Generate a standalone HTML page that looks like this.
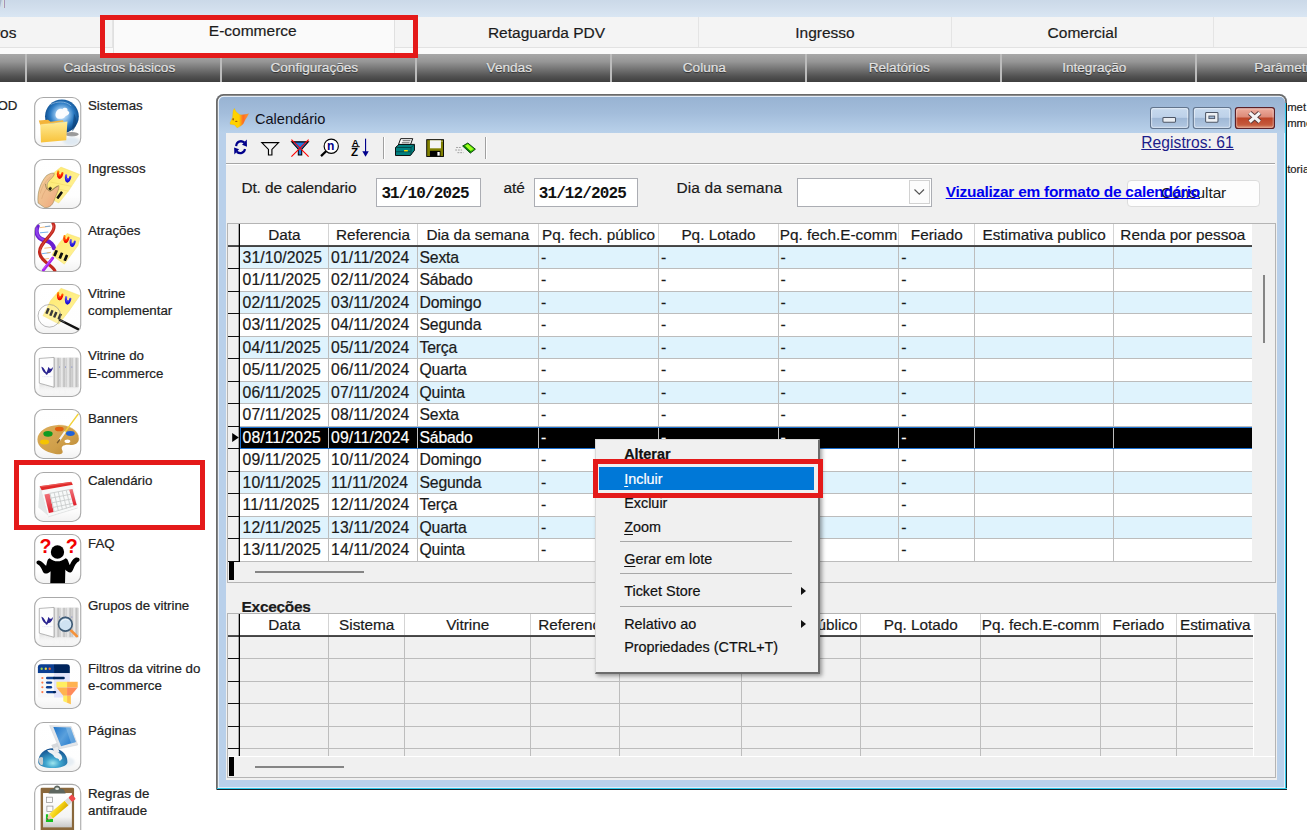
<!DOCTYPE html>
<html lang="pt-BR"><head><meta charset="utf-8"><title>Calendário</title>
<style>
*{box-sizing:border-box}
html,body{margin:0;padding:0}
body{width:1307px;height:830px;overflow:hidden;position:relative;background:#fff;font-family:"Liberation Sans",sans-serif;font-size:15px;color:#1a1a1a}
.abs{position:absolute}
/* top strip */
#strip{position:absolute;left:0;top:0;width:1307px;height:17px;background:linear-gradient(180deg,#cbd9e8 0%,#d2dfed 50%,#d9e6f3 100%)}
/* tabs */
#tabs{position:absolute;left:0;top:17px;width:1307px;height:31px;background:#f4f4f4;border-bottom:1px solid #e2e2e2}
.tab{-webkit-text-stroke:.2px #1c1c1c;position:absolute;top:0;height:30px;padding-top:0.8px;border-right:1px solid #e4e4e4;font-size:15.5px;line-height:30px;text-align:center;color:#1c1c1c;white-space:nowrap}
.tab.sel{height:37px;z-index:2;background:#fafafa;border-left:1px solid #e0e0e0;border-right:1px solid #e0e0e0}
/* dark menubar */
#mbar{position:absolute;left:0;top:54px;width:1307px;height:28px;background:linear-gradient(180deg,#a8a8a8 0%,#959595 28%,#727272 55%,#525252 80%,#3e3e3e 100%)}
.mi{-webkit-text-stroke:.2px #e2e2e2;position:absolute;top:0;height:28px;padding-right:7px;font-size:13.6px;line-height:27px;text-align:center;color:#e2e2e2;text-shadow:0 1px 1px rgba(0,0,0,.55);white-space:nowrap}
.mi:before{content:"";position:absolute;left:0;top:0;width:1.6px;height:28px;background:#bcbcbc}
/* red annotation */
.red{position:absolute;border:5px solid #e41a1a;z-index:50}
/* sidebar */
.ico{position:absolute;left:34px;width:48px;height:50px;border:1px solid #9a9a9a;border-radius:9px;background:linear-gradient(180deg,#ffffff 0%,#fdfdfd 70%,#f1f1f1 100%);overflow:hidden}
.ico svg{position:absolute;left:0;top:0}
.lbl{position:absolute;left:88px;font-size:13.3px;-webkit-text-stroke:.22px #222;line-height:17.5px;color:#222;white-space:nowrap}
.rt{position:absolute;left:1287.2px;font-size:11.3px;line-height:16px;-webkit-text-stroke:.2px;color:#222;white-space:nowrap}
/* window */
#win{position:absolute;left:216.2px;top:94.1px;width:1071.2px;height:696.2px;border-radius:7.5px 7.5px 1px 1px;background:#b9d0ea;box-shadow:inset 0 0 0 1.8px #6a6a6a, inset 0 0 0 2.8px rgba(255,255,255,.8);overflow:hidden}
#win .tbar{position:absolute;left:2.8px;top:2.8px;right:2.8px;height:36.2px;border-radius:5px 5px 0 0;background:linear-gradient(180deg,#98b3d3 0%,#a3bddb 45%,#b9d1ea 100%)}
#win .bline{position:absolute;left:1px;right:0;bottom:0;height:2.3px;background:linear-gradient(180deg,#2fc8ea 0,#2fc8ea 48%,#16242a 52%,#16242a 100%)}
#win .rline{position:absolute;right:0;top:9px;bottom:0;width:2.3px;background:linear-gradient(90deg,#2fc8ea 0,#2fc8ea 48%,#16242a 52%,#16242a 100%)}
#title{position:absolute;left:38.7px;top:15px;font-size:14.6px;line-height:20px;color:#10101a;white-space:nowrap}
#client{position:absolute;left:10.3px;top:39.1px;width:1050.7px;height:647px;background:#f0f0f0}
.wb{position:absolute;top:13px;height:22px;width:39px;border-radius:4px;border:1px solid #6d7f96;box-shadow:inset 0 0 0 1px rgba(255,255,255,.6)}
.wb.n{background:linear-gradient(180deg,#c6d9ee 0%,#bcd0e8 48%,#a3bbd8 52%,#b0c6e0 100%)}
.wb.c{background:linear-gradient(180deg,#e8a898 0%,#d98674 48%,#c04a2e 52%,#cc6a4e 100%);border-color:#6a2a22}
/* toolbar */
#tb{position:absolute;left:0;top:0;width:1051px;height:30px}
.sep{position:absolute;top:4px;width:2px;height:22px;border-left:1px solid #a0a0a0;border-right:1px solid #fff}
#tbl{position:absolute;left:0;top:30px;width:1049px;height:2px;border-top:1px solid #a6a6a6;border-bottom:1px solid #fff}
.t15{-webkit-text-stroke:.2px #1a1a1a;position:absolute;font-size:15.45px;letter-spacing:-.1px;line-height:18px;white-space:nowrap;color:#1a1a1a}
.inp{position:absolute;top:44.9px;height:29.3px;background:#fff;border:1px solid #abadb3;font-family:"Liberation Mono",monospace;font-weight:bold;font-size:16px;letter-spacing:-.87px;line-height:30.5px;padding-left:4px;color:#111;white-space:nowrap;overflow:hidden}
a.lnk{position:absolute;color:#0000ee;font-weight:bold;text-decoration:underline;font-size:15.45px;letter-spacing:-.25px;line-height:18px;white-space:nowrap}
#btn{position:absolute;letter-spacing:-.1px;border:1px solid #dcdcdc;border-radius:4px;background:#fdfdfd;text-align:center;font-size:15.45px;line-height:24.5px;color:#1a1a1a}
/* grids */
.grid{position:absolute;overflow:hidden;background:#f0f0f0;border:1px solid #b4b4b4}
.grid .hd{position:absolute;left:12px;top:0;height:21px;background:#fff}
.grid .h{-webkit-text-stroke:.2px #1a1a1a;position:absolute;top:0;height:21px;line-height:22.5px;text-align:center;font-size:15.3px;letter-spacing:0;border-right:1px solid #d4d4d4;white-space:nowrap;overflow:hidden;color:#1a1a1a}
.grid .row{position:absolute;left:12px;border-bottom:1px solid #bcbcbc;background:#fff;overflow:hidden}
.grid .row.alt{background:#dff3fd}
.grid .row.sel{background:#000;color:#fff;border-top:1px solid #1a6fd0;border-bottom:1px solid #1a6fd0;border-left:1px solid #1a6fd0}
.grid .c{-webkit-text-stroke:.2px;position:absolute;top:0;height:100%;line-height:21.6px;font-size:15.75px;letter-spacing:.06px;padding-left:1.9px;border-right:1px solid #bdbdbd;white-space:nowrap;overflow:hidden}
.grid .c.tx{font-size:15.75px;letter-spacing:-.2px}
.grid .row.sel .c{line-height:19.6px;margin-left:-1px}
.grid .tick{position:absolute;left:0;width:11px;height:1px;background:#111}
.grid .vl{position:absolute;left:10px;top:0;width:2px;background:linear-gradient(90deg,rgba(0,0,0,.3) 0,rgba(0,0,0,.3) 50%,#000 50%,#000 100%)}
.grid .hl1{position:absolute;left:0;height:1px;background:rgba(0,0,0,.68)}
.grid .hl2{position:absolute;left:0;height:1px;background:rgba(0,0,0,.72)}
.grid .hs{position:absolute;left:0;background:#f0f0f0}
.grid .blk{position:absolute;left:1px;width:5px;background:#000}
.grid .thumb{position:absolute;height:2px;background:#858585}
/* context menu */
#cm{position:absolute;left:595px;top:439px;width:224.6px;height:235.2px;background:#f0f0f0;border:1px solid #d9d9d9;border-right:2.6px solid #6c6c6c;border-bottom:2.8px solid #6c6c6c;box-shadow:2px 2px 4px rgba(0,0,0,.38);z-index:40;font-size:14.4px;color:#111}
#cm .it{-webkit-text-stroke:.2px;position:absolute;left:28.2px;white-space:nowrap;line-height:20px}
#cm .hl{position:absolute;left:2.6px;top:26.6px;width:215.2px;height:23.2px;background:#0078d7}
#cm .sp{position:absolute;left:24px;width:172px;height:1px;background:#a8a8a8}
#cm .ar{position:absolute;left:205px;width:0;height:0;border-left:5px solid #111;border-top:4.5px solid transparent;border-bottom:4.5px solid transparent}
u{text-decoration:underline;text-underline-offset:2px}

</style></head>
<body>
<div id="strip"><div class="abs" style="left:4px;top:0;width:1.2px;height:8px;background:#a994b6"></div><div class="abs" style="left:2.6px;top:0;width:1.2px;height:7.5px;background:#dfe6d8;opacity:.8"></div><div class="abs" style="left:-1px;top:-1px;width:2px;height:8px;background:#a9b7c9;transform:skewX(-12deg)"></div></div>
<div id="gap" class="abs" style="left:0;top:48px;width:1307px;height:6px;background:#fafafa"></div>
<div id="tabs">
  <div class="tab" style="left:-170px;width:283px;text-align:right;padding-right:95.5px">Cadastros</div>
  <div class="tab sel" style="left:113px;width:282px;padding-right:2.5px;line-height:25.4px">E-commerce</div>
  <div class="tab" style="left:395px;width:304px">Retaguarda PDV</div>
  <div class="tab" style="left:699px;width:253px">Ingresso</div>
  <div class="tab" style="left:952px;width:262px">Comercial</div>
  <div class="tab" style="left:1214px;width:200px;border-right:0"></div>
</div>
<div id="mbar">
  <div class="mi" style="left:25.3px;width:195px">Cadastros básicos</div>
  <div class="mi" style="left:220.3px;width:195px">Configurações</div>
  <div class="mi" style="left:415.3px;width:195px">Vendas</div>
  <div class="mi" style="left:610.3px;width:195px">Coluna</div>
  <div class="mi" style="left:805.3px;width:195px">Relatórios</div>
  <div class="mi" style="left:1000.3px;width:195px">Integração</div>
  <div class="mi" style="left:1195.3px;width:195px">Parâmetros</div>
</div>

<svg width="0" height="0" style="position:absolute"><defs>
<linearGradient id="bx" x1="0" y1="0" x2="0" y2="1"><stop offset="0" stop-color="#fff"/><stop offset=".75" stop-color="#fefefe"/><stop offset="1" stop-color="#f2f2f2"/></linearGradient>
<clipPath id="cb"><rect x="72" y="70" width="663" height="705" rx="115"/></clipPath>
<radialGradient id="gl" cx=".5" cy=".45" r=".6"><stop offset="0" stop-color="#eaf5ff"/><stop offset=".3" stop-color="#8fc1ec"/><stop offset=".58" stop-color="#2d7cc4"/><stop offset=".86" stop-color="#0b4a8a"/><stop offset="1" stop-color="#072f5c"/></radialGradient>
<linearGradient id="fo" x1="0" y1="0" x2="0" y2="1"><stop offset="0" stop-color="#ffec96"/><stop offset="1" stop-color="#f8c23a"/></linearGradient>
<linearGradient id="tk" x1="0" y1="0" x2="1" y2="1"><stop offset="0" stop-color="#ffe96a"/><stop offset="1" stop-color="#fff3a0"/></linearGradient>
<linearGradient id="rw" x1="0" y1="0" x2="0" y2="1"><stop offset="0" stop-color="#ff8a00"/><stop offset=".5" stop-color="#ff1a00"/><stop offset="1" stop-color="#e00000"/></linearGradient>
<linearGradient id="bw" x1="0" y1="0" x2="0" y2="1"><stop offset="0" stop-color="#6a5ae8"/><stop offset=".5" stop-color="#2a1ae0"/><stop offset="1" stop-color="#1a10c8"/></linearGradient>
<linearGradient id="sk" x1="0" y1="0" x2="1" y2="1"><stop offset="0" stop-color="#f3cf9a"/><stop offset=".6" stop-color="#efb98a"/><stop offset="1" stop-color="#f0a078"/></linearGradient>
<linearGradient id="pal" x1="0" y1="0" x2="1" y2="1"><stop offset="0" stop-color="#dcae5c"/><stop offset=".6" stop-color="#cf9f4a"/><stop offset="1" stop-color="#b98732"/></linearGradient>
<linearGradient id="scr" x1="0" y1="0" x2="1" y2=".6"><stop offset="0" stop-color="#1f74c8"/><stop offset=".55" stop-color="#5aa0dc"/><stop offset="1" stop-color="#2a7fd0"/></linearGradient>
<radialGradient id="hg" cx=".5" cy=".75" r=".7"><stop offset="0" stop-color="#9fe6ee"/><stop offset=".35" stop-color="#3fa6cf"/><stop offset="1" stop-color="#12508f"/></radialGradient>
<linearGradient id="pn" x1="0" y1="0" x2="1" y2="1"><stop offset="0" stop-color="#ffe84a"/><stop offset=".5" stop-color="#f2cf10"/><stop offset="1" stop-color="#d8a800"/></linearGradient>
<linearGradient id="pp" x1="0" y1="0" x2="0" y2="1"><stop offset="0" stop-color="#ffffff"/><stop offset=".7" stop-color="#f4f4f4"/><stop offset="1" stop-color="#c8c8c8"/></linearGradient>
<linearGradient id="gp" x1="0" y1="0" x2="1" y2="0"><stop offset="0" stop-color="#c9c9c9"/><stop offset=".35" stop-color="#efefef"/><stop offset=".7" stop-color="#bdbdbd"/><stop offset="1" stop-color="#d8d8d8"/></linearGradient>
<linearGradient id="rf" x1="0" y1="0" x2="0" y2="1"><stop offset="0" stop-color="#e2e2e2"/><stop offset="1" stop-color="#fbfbfb" stop-opacity="0"/></linearGradient>
<linearGradient id="rd" x1="0" y1="0" x2="0" y2="1"><stop offset="0" stop-color="#f0737a"/><stop offset="1" stop-color="#e0202c"/></linearGradient>
<filter id="b1" x="-20%" y="-20%" width="140%" height="140%"><feGaussianBlur stdDeviation="6"/></filter>
<filter id="b2" x="-20%" y="-20%" width="140%" height="140%"><feGaussianBlur stdDeviation="12"/></filter>
</defs></svg>
<svg class="abs" style="left:30px;top:93px" width="56" height="57" viewBox="0 0 815.7 830.3"><rect x="68" y="66" width="671" height="713" rx="125" ry="125" fill="url(#bx)" stroke="#a9a9a9" stroke-width="16"/><g clip-path="url(#cb)"><ellipse cx="610" cy="600" rx="100" ry="32" fill="#9a9a9a" filter="url(#b1)"/><ellipse cx="600" cy="700" rx="120" ry="60" fill="#dfe9f2" filter="url(#b2)"/><circle cx="465" cy="340" r="246" fill="url(#gl)"/><path d="M372,310 C380,250 430,215 470,235 C500,200 560,215 545,260 C600,280 560,330 520,335 C500,375 440,385 400,370 C380,355 368,340 372,310 Z" fill="#fff" opacity=".95" filter="url(#b1)"/><path d="M300,170 C380,120 520,110 600,190" fill="none" stroke="#cfe6fa" stroke-width="14" opacity=".5" filter="url(#b1)"/><path d="M640,300 C690,380 690,480 620,560 C600,520 640,400 640,300Z" fill="#0a3f78" opacity=".6" filter="url(#b1)"/><path d="M128,400 L262,388 L300,418 L480,398 L492,420 L150,470 Z" fill="#f3b43a"/><path d="M150,462 L545,418 L528,690 L160,722 Z" fill="url(#fo)"/><path d="M150,462 L545,418" stroke="#fff2b0" stroke-width="8" opacity=".8"/></g></svg>
<div class="lbl" style="top:97.2px">Sistemas</div>
<svg class="abs" style="left:30px;top:155px" width="56" height="57" viewBox="0 0 815.7 830.3"><rect x="68" y="66" width="671" height="713" rx="125" ry="125" fill="url(#bx)" stroke="#a9a9a9" stroke-width="16"/><g clip-path="url(#cb)"><polygon points="452,176 720,282 560,525 418,700 345,660 222,480 355,250" fill="url(#tk)" stroke="#f1dd6a" stroke-width="6" stroke-linejoin="round"/><g transform="translate(440,290) scale(0.95)"><path d="M-30,-52 C-40,-10 -32,40 -6,42 C14,42 26,5 34,-28" fill="none" stroke="url(#rw)" stroke-width="34" stroke-linecap="round"/><ellipse cx="-12" cy="22" rx="30" ry="36" fill="url(#rw)"/></g><g transform="translate(555,345) scale(0.95)"><path d="M-30,-52 C-40,-10 -32,40 -6,42 C14,42 26,5 34,-28" fill="none" stroke="url(#bw)" stroke-width="34" stroke-linecap="round"/><ellipse cx="-12" cy="22" rx="30" ry="36" fill="url(#bw)"/></g><rect x="272.0" y="466.0" width="40" height="52" rx="8" fill="#111" transform="rotate(35 292 492)"/><rect x="413.0" y="525.0" width="38" height="120" rx="8" fill="#111" transform="rotate(35 432 585)"/><path d="M255,470 L560,525 M300,395 L600,455" stroke="#e6cf55" stroke-width="7" opacity=".8"/><path d="M118,700 C100,560 150,400 240,300 C290,265 350,250 355,275 C350,315 300,345 262,395 C235,450 255,505 300,520 C340,500 370,455 420,445 C430,500 385,560 345,680 C320,740 270,775 210,765 Z" fill="url(#sk)" stroke="#7d7440" stroke-width="11" stroke-opacity=".6"/><path d="M150,560 C170,470 220,380 300,320 M170,640 C190,560 230,500 260,470" fill="none" stroke="#c98d5e" stroke-width="8" opacity=".6"/><path d="M225,420 C225,480 260,530 300,525 C345,505 365,470 405,455" fill="none" stroke="#6d6a35" stroke-width="14" opacity=".6"/></g></svg>
<div class="lbl" style="top:159.7px">Ingressos</div>
<svg class="abs" style="left:30px;top:218px" width="56" height="57" viewBox="0 0 815.7 830.3"><rect x="68" y="66" width="671" height="713" rx="125" ry="125" fill="url(#bx)" stroke="#a9a9a9" stroke-width="16"/><g clip-path="url(#cb)"><path d="M110,120 C60,250 150,320 230,330 C300,345 340,400 350,440" fill="none" stroke="#6a1fd0" stroke-width="62" stroke-linecap="round"/><path d="M100,150 C80,240 140,300 200,320" fill="none" stroke="#9a4af0" stroke-width="30" stroke-linecap="round" opacity=".8"/><g stroke-width="12" stroke-linecap="round"><path d="M150,140 L290,120" stroke="#f0b060"/><path d="M225,125 L290,118" stroke="#5aa0e8"/><path d="M150,215 L260,205" stroke="#5aa0e8"/><path d="M215,440 L300,430" stroke="#f0b060"/><path d="M175,520 L290,505" stroke="#5aa0e8"/><path d="M250,508 L300,500" stroke="#f0b060"/><path d="M210,600 L270,590" stroke="#f0b060"/></g><path d="M335,78 C420,210 120,350 140,505 C152,640 330,680 362,770" fill="none" stroke="#c2281e" stroke-width="46" stroke-linecap="round"/><path d="M335,90 C400,210 130,350 150,500" fill="none" stroke="#e8685a" stroke-width="12" opacity=".7"/><path d="M330,585 L195,760" fill="none" stroke="#a520f0" stroke-width="44" stroke-linecap="round"/><path d="M318,590 L190,750" fill="none" stroke="#d27af8" stroke-width="12" opacity=".8"/><polygon points="540,225 728,292 700,400 500,672 318,540 400,400" fill="url(#tk)" stroke="#f1dd6a" stroke-width="6" stroke-linejoin="round"/><g transform="translate(530,310) scale(0.9)"><path d="M-30,-52 C-40,-10 -32,40 -6,42 C14,42 26,5 34,-28" fill="none" stroke="url(#rw)" stroke-width="34" stroke-linecap="round"/><ellipse cx="-12" cy="22" rx="30" ry="36" fill="url(#rw)"/></g><g transform="translate(622,368) scale(0.9)"><path d="M-30,-52 C-40,-10 -32,40 -6,42 C14,42 26,5 34,-28" fill="none" stroke="url(#bw)" stroke-width="34" stroke-linecap="round"/><ellipse cx="-12" cy="22" rx="30" ry="36" fill="url(#bw)"/></g><rect x="352.0" y="466.0" width="40" height="92" rx="8" fill="#111" transform="rotate(22 372 512)"/><rect x="430.0" y="502.0" width="40" height="92" rx="8" fill="#111" transform="rotate(22 450 548)"/><rect x="502.0" y="534.0" width="40" height="92" rx="8" fill="#111" transform="rotate(22 522 580)"/></g></svg>
<div class="lbl" style="top:222.2px">Atrações</div>
<svg class="abs" style="left:30px;top:280px" width="56" height="57" viewBox="0 0 815.7 830.3"><rect x="68" y="66" width="671" height="713" rx="125" ry="125" fill="url(#bx)" stroke="#a9a9a9" stroke-width="16"/><g clip-path="url(#cb)"><polygon points="452,120 727,226 560,462 420,642 188,520 300,300" fill="url(#tk)" stroke="#f1dd6a" stroke-width="6" stroke-linejoin="round"/><g transform="translate(440,240) scale(0.95)"><path d="M-30,-52 C-40,-10 -32,40 -6,42 C14,42 26,5 34,-28" fill="none" stroke="url(#rw)" stroke-width="34" stroke-linecap="round"/><ellipse cx="-12" cy="22" rx="30" ry="36" fill="url(#rw)"/></g><g transform="translate(555,300) scale(0.95)"><path d="M-30,-52 C-40,-10 -32,40 -6,42 C14,42 26,5 34,-28" fill="none" stroke="url(#bw)" stroke-width="34" stroke-linecap="round"/><ellipse cx="-12" cy="22" rx="30" ry="36" fill="url(#bw)"/></g><rect x="237.0" y="408.0" width="36" height="88" rx="8" fill="#111" transform="rotate(22 255 452)"/><rect x="294.0" y="436.0" width="36" height="88" rx="8" fill="#111" transform="rotate(22 312 480)"/><rect x="350.0" y="462.0" width="36" height="88" rx="8" fill="#111" transform="rotate(22 368 506)"/><rect x="414.0" y="488.0" width="36" height="88" rx="8" fill="#111" transform="rotate(22 432 532)"/><circle cx="282" cy="522" r="165" fill="#fff" fill-opacity=".18" stroke="#8f8f8f" stroke-width="9"/><path d="M435,582 L700,716" stroke="#111" stroke-width="34" stroke-linecap="round"/><path d="M425,575 L500,612" stroke="#555" stroke-width="16" stroke-linecap="round"/></g></svg>
<div class="lbl" style="top:284.7px">Vitrine<br>complementar</div>
<svg class="abs" style="left:30px;top:343px" width="56" height="57" viewBox="0 0 815.7 830.3"><rect x="68" y="66" width="671" height="713" rx="125" ry="125" fill="url(#bx)" stroke="#a9a9a9" stroke-width="16"/><g clip-path="url(#cb)"><rect x="135" y="600" width="575" height="150" fill="url(#rf)"/><g stroke="#f3f3f3" stroke-width="10"><path d="M220,610V750M350,640V750M430,640V750M515,640V750M610,640V750"/></g><rect x="350" y="215" width="360" height="428" fill="url(#gp)"/><rect x="350" y="215" width="85" height="428" fill="url(#gp)"/><rect x="435" y="215" width="85" height="428" fill="url(#gp)"/><rect x="525" y="215" width="85" height="428" fill="url(#gp)"/><rect x="615" y="215" width="85" height="428" fill="url(#gp)"/><g fill="#7a84c8"><rect x="425" y="340" width="10" height="22"/><rect x="512" y="340" width="10" height="22"/><rect x="605" y="340" width="10" height="22"/></g><polygon points="135,225 350,210 350,645 135,585" fill="#fdfdfd" stroke="#8e8e8e" stroke-width="9" stroke-linejoin="round"/><path d="M165,345 C200,350 215,395 240,430 C255,400 262,370 270,345 C285,375 300,395 335,350 C330,400 300,440 262,440 C250,470 235,470 225,445 C195,430 175,390 165,345Z" fill="#2a2490"/><path d="M180,490 H330" stroke="#b9bde6" stroke-width="6" stroke-dasharray="14 8"/></g></svg>
<div class="lbl" style="top:347.2px">Vitrine do<br>E-commerce</div>
<svg class="abs" style="left:30px;top:405px" width="56" height="57" viewBox="0 0 815.7 830.3"><rect x="68" y="66" width="671" height="713" rx="125" ry="125" fill="url(#bx)" stroke="#a9a9a9" stroke-width="16"/><g clip-path="url(#cb)"><path d="M410,292 C560,285 715,370 712,490 C708,570 640,585 560,580 C480,578 445,610 470,660 C495,710 440,730 370,712 C220,690 105,610 108,500 C112,380 250,300 410,292 Z" fill="url(#pal)"/><path d="M410,292 C560,285 715,370 712,490" fill="none" stroke="#e8c27a" stroke-width="10" opacity=".6"/><ellipse cx="545" cy="527" rx="42" ry="26" fill="#fff"/><ellipse cx="427" cy="350" rx="64" ry="34" fill="#e2600e"/><ellipse cx="262" cy="420" rx="68" ry="42" fill="#0f9a22"/><ellipse cx="588" cy="415" rx="64" ry="36" fill="#1f62d8"/><ellipse cx="212" cy="540" rx="66" ry="36" fill="#f5c400"/><path d="M700,135 L505,400" stroke="#f2d23a" stroke-width="20" stroke-linecap="round"/><path d="M505,400 L432,505" stroke="#f4f4f4" stroke-width="30" stroke-linecap="round"/><path d="M430,508 L400,548" stroke="#7a5a2a" stroke-width="22" stroke-linecap="round"/></g></svg>
<div class="lbl" style="top:409.7px">Banners</div>
<svg class="abs" style="left:30px;top:468px" width="56" height="57" viewBox="0 0 815.7 830.3"><rect x="68" y="66" width="671" height="713" rx="125" ry="125" fill="url(#bx)" stroke="#a9a9a9" stroke-width="16"/><g clip-path="url(#cb)"><polygon points="120,575 140,265 170,325 270,700" fill="#e3e7e7"/><polygon points="270,700 700,570 690,590 262,722" fill="#e4e6e6"/><polygon points="170,325 625,245 700,570 270,700" fill="#f7f9f9"/><polygon points="140,265 600,200 625,245 170,325" fill="#e02a2a"/><polygon points="150,262 600,204 606,220 158,282" fill="#f06a64" opacity=".7"/><polygon points="210,385 285,370 345,640 275,655" fill="url(#rd)"/><polygon points="570,315 620,305 680,540 635,550" fill="url(#rd)"/><g stroke="#c9cccc" stroke-width="13" fill="none"><path d="M292,372 L352,636M352,360 L412,620M412,348 L472,604M470,336 L532,588M528,325 L590,572"/><path d="M285,370 L570,315M300,440 L590,383M316,508 L607,450M332,575 L625,515M345,640 L640,552"/></g></g></svg>
<div class="lbl" style="top:472.2px">Calendário</div>
<svg class="abs" style="left:30px;top:530px" width="56" height="57" viewBox="0 0 815.7 830.3"><rect x="68" y="66" width="671" height="713" rx="125" ry="125" fill="url(#bx)" stroke="#a9a9a9" stroke-width="16"/><g clip-path="url(#cb)"><circle cx="400" cy="320" r="97" fill="#000"/><path d="M295,775 L300,600 C260,640 215,650 190,610 C165,560 150,520 110,500 C70,470 110,420 160,455 C195,480 215,510 235,520 C250,470 250,420 285,410 C350,470 450,470 520,410 C560,420 560,480 580,510 C600,470 620,420 660,405 C720,390 750,440 690,470 C650,500 640,560 615,600 C590,640 540,610 515,575 L510,775 Z" fill="#000"/><text x="140" y="338" font-family="Liberation Sans,sans-serif" font-weight="bold" font-size="285" fill="#f20000">?</text><text x="520" y="328" font-family="Liberation Sans,sans-serif" font-weight="bold" font-size="285" fill="#f20000">?</text></g></svg>
<div class="lbl" style="top:534.7px">FAQ</div>
<svg class="abs" style="left:30px;top:593px" width="56" height="57" viewBox="0 0 815.7 830.3"><rect x="68" y="66" width="671" height="713" rx="125" ry="125" fill="url(#bx)" stroke="#a9a9a9" stroke-width="16"/><g clip-path="url(#cb)"><rect x="135" y="600" width="575" height="150" fill="url(#rf)"/><g stroke="#f3f3f3" stroke-width="10"><path d="M220,610V750M350,640V750M430,640V750M515,640V750M610,640V750"/></g><rect x="350" y="215" width="360" height="428" fill="url(#gp)"/><rect x="350" y="215" width="85" height="428" fill="url(#gp)"/><rect x="435" y="215" width="85" height="428" fill="url(#gp)"/><rect x="525" y="215" width="85" height="428" fill="url(#gp)"/><rect x="615" y="215" width="85" height="428" fill="url(#gp)"/><g fill="#7a84c8"><rect x="425" y="340" width="10" height="22"/><rect x="512" y="340" width="10" height="22"/><rect x="605" y="340" width="10" height="22"/></g><polygon points="135,225 350,210 350,645 135,585" fill="#fdfdfd" stroke="#8e8e8e" stroke-width="9" stroke-linejoin="round"/><path d="M165,345 C200,350 215,395 240,430 C255,400 262,370 270,345 C285,375 300,395 335,350 C330,400 300,440 262,440 C250,470 235,470 225,445 C195,430 175,390 165,345Z" fill="#2a2490"/><path d="M180,490 H330" stroke="#b9bde6" stroke-width="6" stroke-dasharray="14 8"/><path d="M600,548 L682,628" stroke="#f5923a" stroke-width="40" stroke-linecap="round"/><circle cx="515" cy="455" r="100" fill="#cfe2f2" stroke="#3f5b75" stroke-width="24"/><path d="M455,425 C470,385 520,375 560,395" fill="none" stroke="#fff" stroke-width="12" opacity=".8" stroke-linecap="round"/></g></svg>
<div class="lbl" style="top:597.2px">Grupos de vitrine</div>
<svg class="abs" style="left:30px;top:655px" width="56" height="57" viewBox="0 0 815.7 830.3"><rect x="68" y="66" width="671" height="713" rx="125" ry="125" fill="url(#bx)" stroke="#a9a9a9" stroke-width="16"/><g clip-path="url(#cb)"><path d="M115,265 V180 Q115,135 160,135 H350 V265 Z" fill="#0b3e92"/><path d="M350,135 H535 Q580,135 580,180 V265 H350 Z" fill="#00245c"/><rect x="115" y="265" width="235" height="355" fill="#f8f8f8"/><rect x="350" y="265" width="230" height="355" fill="#e4e4fb"/><circle cx="170" cy="200" r="17" fill="#9fd24a"/><circle cx="230" cy="200" r="17" fill="#f2e040"/><circle cx="287" cy="200" r="17" fill="#f56a2a"/><g fill="#ff7a4a"><circle cx="180" cy="335" r="16"/><circle cx="180" cy="402" r="16"/><circle cx="180" cy="470" r="16"/><circle cx="180" cy="540" r="16"/></g><g stroke-width="34" stroke-linecap="round"><path d="M250,335H350" stroke="#0b3e92"/><path d="M350,335H490" stroke="#00245c"/><path d="M250,402H305" stroke="#0b3e92"/><path d="M250,470H305" stroke="#0b3e92"/><path d="M250,540H350" stroke="#0b3e92"/><path d="M350,540H365" stroke="#00245c"/></g><rect x="385" y="390" width="155" height="82" fill="#ffee60"/><rect x="540" y="390" width="155" height="82" fill="#ffb350"/><polygon points="385,472 540,472 540,592 485,592" fill="#ffb350"/><polygon points="540,472 695,472 595,592 540,592" fill="#ff8a5a"/><polygon points="485,592 540,592 540,695 485,672" fill="#ffee60"/><polygon points="540,592 595,592 595,716 540,695" fill="#ffc24d"/></g></svg>
<div class="lbl" style="top:659.7px">Filtros da vitrine do<br>e-commerce</div>
<svg class="abs" style="left:30px;top:718px" width="56" height="57" viewBox="0 0 815.7 830.3"><rect x="68" y="66" width="671" height="713" rx="125" ry="125" fill="url(#bx)" stroke="#a9a9a9" stroke-width="16"/><g clip-path="url(#cb)"><ellipse cx="520" cy="640" rx="130" ry="70" fill="#e6edf3" filter="url(#b2)"/><path d="M120,640 C120,520 220,440 330,440 C440,440 545,520 545,640 C545,700 440,730 330,730 C220,730 120,700 120,640 Z" fill="url(#hg)"/><path d="M250,470 C300,450 360,470 400,500 C450,520 470,560 470,590 C450,620 430,640 420,600 C400,580 370,590 350,560 C340,520 280,520 250,470Z" fill="#eef2f4"/><path d="M125,600 C140,560 170,560 190,580 C185,620 200,660 180,690 C150,690 125,650 125,600Z" fill="#c9cdd0"/><path d="M310,395 L400,360 L440,440 L350,480 Z" fill="#d6d9dc"/><path d="M340,440 L400,420 L430,500 L360,520Z" fill="#e9ebed"/><polygon points="285,110 600,125 695,392 430,448" fill="#e3e6ea" stroke="#cfd3d8" stroke-width="8" stroke-linejoin="round"/><polygon points="340,132 590,138 668,350 452,410" fill="url(#scr)"/><polygon points="520,136 590,138 668,350 600,370" fill="#9cc7ea" opacity=".45"/></g></svg>
<div class="lbl" style="top:722.2px">Páginas</div>
<svg class="abs" style="left:30px;top:773px" width="56" height="57" viewBox="0 0 815.7 830.3"><rect x="68" y="166" width="671" height="788" rx="125" fill="#fff" stroke="#a9a9a9" stroke-width="16"/><g clip-path="url(#cb12)"><rect x="155" y="215" width="487" height="640" rx="18" fill="#8a683c"/><rect x="190" y="292" width="420" height="500" fill="url(#pp)"/><path d="M270,300 L300,235 L350,225 C350,170 440,170 440,225 L490,235 L520,300 Z" fill="#5d665f"/><ellipse cx="395" cy="228" rx="28" ry="18" fill="#dfe6e0"/><rect x="242" y="352" width="88" height="78" fill="#fbfbfb" stroke="#8e8e8e" stroke-width="10"/><rect x="246" y="482" width="88" height="78" fill="#fbfbfb" stroke="#8e8e8e" stroke-width="10"/><path d="M232,600 H265 V670 H335 V712 H232 Z" fill="#16c01e"/><g transform="rotate(-40.5 460 497)"><rect x="255" y="455" width="300" height="86" fill="url(#pn)"/><rect x="555" y="455" width="70" height="86" fill="#d9d9d9"/><rect x="625" y="455" width="72" height="86" rx="16" fill="#ee4a4a"/><polygon points="255,455 255,541 170,498" fill="#f1c9a8"/><polygon points="200,483 200,513 170,498" fill="#4a3a3a"/></g></g><defs><clipPath id="cb12"><rect x="72" y="170" width="663" height="800" rx="115"/></clipPath></defs></svg>
<div class="lbl" style="top:784.7px">Regras de<br>antifraude</div>
<div class="lbl" style="left:-2.5px;top:97.2px">OD</div>
<div id="win">
<div class="tbar"></div><div class="rline"></div><div class="bline"></div>
<svg class="abs" style="left:10px;top:10px;z-index:5" width="30" height="28" viewBox="0 0 889 830">
<defs><linearGradient id="fx" x1="0" y1="0" x2="1" y2="0"><stop offset="0" stop-color="#ffd400"/><stop offset=".48" stop-color="#ffd000"/><stop offset=".7" stop-color="#ff6a25"/><stop offset="1" stop-color="#ff9a30"/></linearGradient></defs>
<path d="M248,128 L302,232 L400,312 C500,330 600,310 672,285 C640,380 575,440 545,520 C520,590 480,640 332,712 L250,622 L120,602 L120,545 L190,402 L208,200 Z" fill="url(#fx)" stroke="#c98a10" stroke-width="8" stroke-opacity=".5" stroke-linejoin="round"/>
<ellipse cx="212" cy="450" rx="22" ry="36" fill="#9a5a10"/><ellipse cx="305" cy="515" rx="38" ry="20" fill="#9a5a10"/>
</svg><svg class="abs" style="left:929px;top:6px;z-index:6" width="150" height="36" viewBox="0 0 1307 313.7">
<defs>
<linearGradient id="wbn" x1="0" y1="0" x2="0" y2="1"><stop offset="0" stop-color="#c8daee"/><stop offset=".47" stop-color="#bdd1e9"/><stop offset=".5" stop-color="#9fb8d6"/><stop offset="1" stop-color="#b4c9e2"/></linearGradient>
<linearGradient id="wbc" x1="0" y1="0" x2="0" y2="1"><stop offset="0" stop-color="#eeb0a2"/><stop offset=".45" stop-color="#dc8a78"/><stop offset=".5" stop-color="#bd4428"/><stop offset=".8" stop-color="#c4573a"/><stop offset="1" stop-color="#d88a6a"/></linearGradient>
</defs>
<rect x="48" y="66" width="334" height="182" rx="22" fill="url(#wbn)" stroke="#62748c" stroke-width="9"/>
<rect x="58" y="76" width="314" height="162" rx="15" fill="none" stroke="#fff" stroke-opacity=".55" stroke-width="8"/>
<rect x="421" y="66" width="328" height="182" rx="22" fill="url(#wbn)" stroke="#62748c" stroke-width="9"/>
<rect x="431" y="76" width="308" height="162" rx="15" fill="none" stroke="#fff" stroke-opacity=".55" stroke-width="8"/>
<rect x="788" y="66" width="340" height="182" rx="22" fill="url(#wbc)" stroke="#5a2028" stroke-width="10"/>
<rect x="799" y="77" width="318" height="160" rx="15" fill="none" stroke="#fff" stroke-opacity=".4" stroke-width="8"/>
<rect x="156" y="152" width="110" height="42" rx="8" fill="#e9edf2" stroke="#4d5666" stroke-width="9"/>
<rect x="528" y="108" width="108" height="86" rx="8" fill="#eef1f5" stroke="#4d5666" stroke-width="9"/>
<rect x="557" y="140" width="50" height="22" fill="#9fb8d6" stroke="#4d5666" stroke-width="8"/>
<path d="M912,112 L1000,190 M1000,112 L912,190" stroke="#5a3a3a" stroke-width="44" stroke-linecap="butt"/>
<path d="M912,112 L1000,190 M1000,112 L912,190" stroke="#f4f4f4" stroke-width="28" stroke-linecap="butt"/>
</svg>
<div id="title">Calendário</div>
<div id="client">
<div class="sep" style="left:156.6px"></div><div class="sep" style="left:258.5px"></div><div id="tbl"></div>
<a class="lnk" style="left:914.8px;top:0.9px;font-weight:normal;color:#1c1c8a;font-size:15.6px;letter-spacing:.05px">Registros: 61</a>
<div class="t15" style="left:14.9px;top:46.1px">Dt. de calendario</div>
<div class="inp" style="left:149.9px;width:104.6px">31/10/2025</div>
<div class="t15" style="left:277.0px;top:46.1px">até</div>
<div class="inp" style="left:307.2px;width:104.6px">31/12/2025</div>
<div class="t15" style="left:449.9px;top:46.1px;letter-spacing:.15px">Dia da semana</div>
<div class="abs" style="left:570.1px;top:45.0px;width:135.7px;height:28.6px;background:#fff;border:1px solid #abadb3"><div class="abs" style="right:1.7px;top:1.3px;width:20.5px;height:23.5px;border:1px solid #d2d2d2;background:#fcfcfc"><svg width="19" height="21" viewBox="0 0 19 21" style="position:absolute;left:0;top:0"><path d="M4.5 8.5 L9.3 13.2 L14 8.5" fill="none" stroke="#555" stroke-width="1.2"/></svg></div></div>
<div id="btn" style="left:900.9px;top:47.1px;width:132.4px;height:26.5px">Consultar</div>
<a class="lnk" style="left:719.2px;top:50.2px">Vizualizar em formato de calendário</a>
<div class="grid" style="left:0.5px;top:89.8px;width:1049px;height:360px">
<div class="hd" style="width:1012px"></div>
<div class="h" style="left:12.7px;width:88.5px">Data</div>
<div class="h" style="left:101.2px;width:88.5px">Referencia</div>
<div class="h" style="left:189.7px;width:121.3px">Dia da semana</div>
<div class="h" style="left:311.0px;width:120.2px">Pq. fech. público</div>
<div class="h" style="left:431.2px;width:119.5px">Pq. Lotado</div>
<div class="h" style="left:550.7px;width:120.6px">Pq. fech.E-comm</div>
<div class="h" style="left:671.3px;width:75.9px">Feriado</div>
<div class="h" style="left:747.2px;width:138.9px">Estimativa publico</div>
<div class="h" style="left:886.1px;width:138.6px">Renda por pessoa</div>
<div class="row alt" style="top:23px;height:22px;width:1012px">
<div class="c" style="left:0.7px;width:88.5px">31/10/2025</div>
<div class="c" style="left:89.2px;width:88.5px">01/11/2024</div>
<div class="c tx" style="left:177.7px;width:121.3px">Sexta</div>
<div class="c tx" style="left:299.0px;width:120.2px">-</div>
<div class="c tx" style="left:419.2px;width:119.5px">-</div>
<div class="c tx" style="left:538.7px;width:120.6px">-</div>
<div class="c tx" style="left:659.3px;width:75.9px">-</div>
<div class="c" style="left:735.2px;width:138.9px"></div>
<div class="c" style="left:874.1px;width:138.6px"></div>
</div>
<div class="tick" style="top:44px"></div>
<div class="row" style="top:45px;height:23px;width:1012px">
<div class="c" style="left:0.7px;width:88.5px">01/11/2025</div>
<div class="c" style="left:89.2px;width:88.5px">02/11/2024</div>
<div class="c tx" style="left:177.7px;width:121.3px">Sábado</div>
<div class="c tx" style="left:299.0px;width:120.2px">-</div>
<div class="c tx" style="left:419.2px;width:119.5px">-</div>
<div class="c tx" style="left:538.7px;width:120.6px">-</div>
<div class="c tx" style="left:659.3px;width:75.9px">-</div>
<div class="c" style="left:735.2px;width:138.9px"></div>
<div class="c" style="left:874.1px;width:138.6px"></div>
</div>
<div class="tick" style="top:67px"></div>
<div class="row alt" style="top:68px;height:22px;width:1012px">
<div class="c" style="left:0.7px;width:88.5px">02/11/2025</div>
<div class="c" style="left:89.2px;width:88.5px">03/11/2024</div>
<div class="c tx" style="left:177.7px;width:121.3px">Domingo</div>
<div class="c tx" style="left:299.0px;width:120.2px">-</div>
<div class="c tx" style="left:419.2px;width:119.5px">-</div>
<div class="c tx" style="left:538.7px;width:120.6px">-</div>
<div class="c tx" style="left:659.3px;width:75.9px">-</div>
<div class="c" style="left:735.2px;width:138.9px"></div>
<div class="c" style="left:874.1px;width:138.6px"></div>
</div>
<div class="tick" style="top:89px"></div>
<div class="row" style="top:90px;height:23px;width:1012px">
<div class="c" style="left:0.7px;width:88.5px">03/11/2025</div>
<div class="c" style="left:89.2px;width:88.5px">04/11/2024</div>
<div class="c tx" style="left:177.7px;width:121.3px">Segunda</div>
<div class="c tx" style="left:299.0px;width:120.2px">-</div>
<div class="c tx" style="left:419.2px;width:119.5px">-</div>
<div class="c tx" style="left:538.7px;width:120.6px">-</div>
<div class="c tx" style="left:659.3px;width:75.9px">-</div>
<div class="c" style="left:735.2px;width:138.9px"></div>
<div class="c" style="left:874.1px;width:138.6px"></div>
</div>
<div class="tick" style="top:112px"></div>
<div class="row alt" style="top:113px;height:22px;width:1012px">
<div class="c" style="left:0.7px;width:88.5px">04/11/2025</div>
<div class="c" style="left:89.2px;width:88.5px">05/11/2024</div>
<div class="c tx" style="left:177.7px;width:121.3px">Terça</div>
<div class="c tx" style="left:299.0px;width:120.2px">-</div>
<div class="c tx" style="left:419.2px;width:119.5px">-</div>
<div class="c tx" style="left:538.7px;width:120.6px">-</div>
<div class="c tx" style="left:659.3px;width:75.9px">-</div>
<div class="c" style="left:735.2px;width:138.9px"></div>
<div class="c" style="left:874.1px;width:138.6px"></div>
</div>
<div class="tick" style="top:134px"></div>
<div class="row" style="top:135px;height:23px;width:1012px">
<div class="c" style="left:0.7px;width:88.5px">05/11/2025</div>
<div class="c" style="left:89.2px;width:88.5px">06/11/2024</div>
<div class="c tx" style="left:177.7px;width:121.3px">Quarta</div>
<div class="c tx" style="left:299.0px;width:120.2px">-</div>
<div class="c tx" style="left:419.2px;width:119.5px">-</div>
<div class="c tx" style="left:538.7px;width:120.6px">-</div>
<div class="c tx" style="left:659.3px;width:75.9px">-</div>
<div class="c" style="left:735.2px;width:138.9px"></div>
<div class="c" style="left:874.1px;width:138.6px"></div>
</div>
<div class="tick" style="top:157px"></div>
<div class="row alt" style="top:158px;height:22px;width:1012px">
<div class="c" style="left:0.7px;width:88.5px">06/11/2025</div>
<div class="c" style="left:89.2px;width:88.5px">07/11/2024</div>
<div class="c tx" style="left:177.7px;width:121.3px">Quinta</div>
<div class="c tx" style="left:299.0px;width:120.2px">-</div>
<div class="c tx" style="left:419.2px;width:119.5px">-</div>
<div class="c tx" style="left:538.7px;width:120.6px">-</div>
<div class="c tx" style="left:659.3px;width:75.9px">-</div>
<div class="c" style="left:735.2px;width:138.9px"></div>
<div class="c" style="left:874.1px;width:138.6px"></div>
</div>
<div class="tick" style="top:179px"></div>
<div class="row" style="top:180px;height:23px;width:1012px">
<div class="c" style="left:0.7px;width:88.5px">07/11/2025</div>
<div class="c" style="left:89.2px;width:88.5px">08/11/2024</div>
<div class="c tx" style="left:177.7px;width:121.3px">Sexta</div>
<div class="c tx" style="left:299.0px;width:120.2px">-</div>
<div class="c tx" style="left:419.2px;width:119.5px">-</div>
<div class="c tx" style="left:538.7px;width:120.6px">-</div>
<div class="c tx" style="left:659.3px;width:75.9px">-</div>
<div class="c" style="left:735.2px;width:138.9px"></div>
<div class="c" style="left:874.1px;width:138.6px"></div>
</div>
<div class="tick" style="top:202px"></div>
<div class="row alt sel" style="top:203px;height:22px;width:1012px">
<div class="c" style="left:0.7px;width:88.5px">08/11/2025</div>
<div class="c" style="left:89.2px;width:88.5px">09/11/2024</div>
<div class="c tx" style="left:177.7px;width:121.3px">Sábado</div>
<div class="c tx" style="left:299.0px;width:120.2px">-</div>
<div class="c tx" style="left:419.2px;width:119.5px">-</div>
<div class="c tx" style="left:538.7px;width:120.6px">-</div>
<div class="c tx" style="left:659.3px;width:75.9px">-</div>
<div class="c" style="left:735.2px;width:138.9px"></div>
<div class="c" style="left:874.1px;width:138.6px"></div>
</div>
<div class="tick" style="top:224px"></div>
<div class="row" style="top:225px;height:23px;width:1012px">
<div class="c" style="left:0.7px;width:88.5px">09/11/2025</div>
<div class="c" style="left:89.2px;width:88.5px">10/11/2024</div>
<div class="c tx" style="left:177.7px;width:121.3px">Domingo</div>
<div class="c tx" style="left:299.0px;width:120.2px">-</div>
<div class="c tx" style="left:419.2px;width:119.5px">-</div>
<div class="c tx" style="left:538.7px;width:120.6px">-</div>
<div class="c tx" style="left:659.3px;width:75.9px">-</div>
<div class="c" style="left:735.2px;width:138.9px"></div>
<div class="c" style="left:874.1px;width:138.6px"></div>
</div>
<div class="tick" style="top:247px"></div>
<div class="row alt" style="top:248px;height:22px;width:1012px">
<div class="c" style="left:0.7px;width:88.5px">10/11/2025</div>
<div class="c" style="left:89.2px;width:88.5px">11/11/2024</div>
<div class="c tx" style="left:177.7px;width:121.3px">Segunda</div>
<div class="c tx" style="left:299.0px;width:120.2px">-</div>
<div class="c tx" style="left:419.2px;width:119.5px">-</div>
<div class="c tx" style="left:538.7px;width:120.6px">-</div>
<div class="c tx" style="left:659.3px;width:75.9px">-</div>
<div class="c" style="left:735.2px;width:138.9px"></div>
<div class="c" style="left:874.1px;width:138.6px"></div>
</div>
<div class="tick" style="top:269px"></div>
<div class="row" style="top:270px;height:23px;width:1012px">
<div class="c" style="left:0.7px;width:88.5px">11/11/2025</div>
<div class="c" style="left:89.2px;width:88.5px">12/11/2024</div>
<div class="c tx" style="left:177.7px;width:121.3px">Terça</div>
<div class="c tx" style="left:299.0px;width:120.2px">-</div>
<div class="c tx" style="left:419.2px;width:119.5px">-</div>
<div class="c tx" style="left:538.7px;width:120.6px">-</div>
<div class="c tx" style="left:659.3px;width:75.9px">-</div>
<div class="c" style="left:735.2px;width:138.9px"></div>
<div class="c" style="left:874.1px;width:138.6px"></div>
</div>
<div class="tick" style="top:292px"></div>
<div class="row alt" style="top:293px;height:22px;width:1012px">
<div class="c" style="left:0.7px;width:88.5px">12/11/2025</div>
<div class="c" style="left:89.2px;width:88.5px">13/11/2024</div>
<div class="c tx" style="left:177.7px;width:121.3px">Quarta</div>
<div class="c tx" style="left:299.0px;width:120.2px">-</div>
<div class="c tx" style="left:419.2px;width:119.5px">-</div>
<div class="c tx" style="left:538.7px;width:120.6px">-</div>
<div class="c tx" style="left:659.3px;width:75.9px">-</div>
<div class="c" style="left:735.2px;width:138.9px"></div>
<div class="c" style="left:874.1px;width:138.6px"></div>
</div>
<div class="tick" style="top:314px"></div>
<div class="row" style="top:315px;height:23px;width:1012px">
<div class="c" style="left:0.7px;width:88.5px">13/11/2025</div>
<div class="c" style="left:89.2px;width:88.5px">14/11/2024</div>
<div class="c tx" style="left:177.7px;width:121.3px">Quinta</div>
<div class="c tx" style="left:299.0px;width:120.2px">-</div>
<div class="c tx" style="left:419.2px;width:119.5px">-</div>
<div class="c tx" style="left:538.7px;width:120.6px">-</div>
<div class="c tx" style="left:659.3px;width:75.9px">-</div>
<div class="c" style="left:735.2px;width:138.9px"></div>
<div class="c" style="left:874.1px;width:138.6px"></div>
</div>
<div class="tick" style="top:337px"></div>
<div class="vl" style="height:338px"></div>
<div class="hl1" style="top:21px;width:1024px"></div><div class="hl2" style="top:22px;width:1024px"></div>
<svg class="abs" style="left:4.3px;top:209.2px" width="7" height="9" viewBox="0 0 7 9"><path d="M0.2 0 L6.8 4.5 L0.2 9 Z" fill="#000"/></svg>
<div class="hs" style="top:338px;width:1048px;height:20px;"><div class="blk" style="top:0;height:18px"></div><div class="thumb" style="left:27.30000000000001px;width:108.3px;top:9px"></div></div>
<div class="abs" style="left:1024px;top:0;width:23px;height:338px;background:#f0f0f0"><div class="abs" style="left:11px;top:51px;width:2px;height:68px;background:#858585"></div></div>
</div>
<div class="t15" style="left:15.1px;top:464.4px;font-weight:bold;font-size:15.45px;letter-spacing:-.28px">Exceções</div>
<div class="grid" style="left:0.5px;top:479.8px;width:1049px;height:165px">
<div class="hd" style="width:1013px"></div>
<div class="h" style="left:12.7px;width:88.5px">Data</div>
<div class="h" style="left:101.2px;width:76.0px">Sistema</div>
<div class="h" style="left:177.2px;width:126.0px">Vitrine</div>
<div class="h" style="left:303.2px;width:89.0px">Referencia</div>
<div class="h" style="left:392.2px;width:121.5px">Dia da semana</div>
<div class="h" style="left:513.7px;width:119.7px">Pq. fech. público</div>
<div class="h" style="left:633.4px;width:119.9px">Pq. Lotado</div>
<div class="h" style="left:753.3px;width:119.4px">Pq. fech.E-comm</div>
<div class="h" style="left:872.7px;width:76.3px">Feriado</div>
<div class="h" style="left:949.0px;width:76.7px;text-align:left;padding-left:3px">Estimativa publico</div>
<div class="row" style="top:23px;height:22px;width:1013px;background:#f0f0f0">
<div class="c" style="left:0.7px;width:88.5px"></div>
<div class="c" style="left:89.2px;width:76.0px"></div>
<div class="c" style="left:165.2px;width:126.0px"></div>
<div class="c" style="left:291.2px;width:89.0px"></div>
<div class="c" style="left:380.2px;width:121.5px"></div>
<div class="c" style="left:501.7px;width:119.7px"></div>
<div class="c" style="left:621.4px;width:119.9px"></div>
<div class="c" style="left:741.3px;width:119.4px"></div>
<div class="c" style="left:860.7px;width:76.3px"></div>
<div class="c" style="left:937.0px;width:76.7px"></div>
</div>
<div class="tick" style="top:44px"></div>
<div class="row" style="top:45px;height:23px;width:1013px;background:#f0f0f0">
<div class="c" style="left:0.7px;width:88.5px"></div>
<div class="c" style="left:89.2px;width:76.0px"></div>
<div class="c" style="left:165.2px;width:126.0px"></div>
<div class="c" style="left:291.2px;width:89.0px"></div>
<div class="c" style="left:380.2px;width:121.5px"></div>
<div class="c" style="left:501.7px;width:119.7px"></div>
<div class="c" style="left:621.4px;width:119.9px"></div>
<div class="c" style="left:741.3px;width:119.4px"></div>
<div class="c" style="left:860.7px;width:76.3px"></div>
<div class="c" style="left:937.0px;width:76.7px"></div>
</div>
<div class="tick" style="top:67px"></div>
<div class="row" style="top:68px;height:22px;width:1013px;background:#f0f0f0">
<div class="c" style="left:0.7px;width:88.5px"></div>
<div class="c" style="left:89.2px;width:76.0px"></div>
<div class="c" style="left:165.2px;width:126.0px"></div>
<div class="c" style="left:291.2px;width:89.0px"></div>
<div class="c" style="left:380.2px;width:121.5px"></div>
<div class="c" style="left:501.7px;width:119.7px"></div>
<div class="c" style="left:621.4px;width:119.9px"></div>
<div class="c" style="left:741.3px;width:119.4px"></div>
<div class="c" style="left:860.7px;width:76.3px"></div>
<div class="c" style="left:937.0px;width:76.7px"></div>
</div>
<div class="tick" style="top:89px"></div>
<div class="row" style="top:90px;height:23px;width:1013px;background:#f0f0f0">
<div class="c" style="left:0.7px;width:88.5px"></div>
<div class="c" style="left:89.2px;width:76.0px"></div>
<div class="c" style="left:165.2px;width:126.0px"></div>
<div class="c" style="left:291.2px;width:89.0px"></div>
<div class="c" style="left:380.2px;width:121.5px"></div>
<div class="c" style="left:501.7px;width:119.7px"></div>
<div class="c" style="left:621.4px;width:119.9px"></div>
<div class="c" style="left:741.3px;width:119.4px"></div>
<div class="c" style="left:860.7px;width:76.3px"></div>
<div class="c" style="left:937.0px;width:76.7px"></div>
</div>
<div class="tick" style="top:112px"></div>
<div class="row" style="top:113px;height:22px;width:1013px;background:#f0f0f0">
<div class="c" style="left:0.7px;width:88.5px"></div>
<div class="c" style="left:89.2px;width:76.0px"></div>
<div class="c" style="left:165.2px;width:126.0px"></div>
<div class="c" style="left:291.2px;width:89.0px"></div>
<div class="c" style="left:380.2px;width:121.5px"></div>
<div class="c" style="left:501.7px;width:119.7px"></div>
<div class="c" style="left:621.4px;width:119.9px"></div>
<div class="c" style="left:741.3px;width:119.4px"></div>
<div class="c" style="left:860.7px;width:76.3px"></div>
<div class="c" style="left:937.0px;width:76.7px"></div>
</div>
<div class="tick" style="top:134px"></div>
<div class="row" style="top:135px;height:7px;width:1013px;background:#f0f0f0;border-bottom:0">
<div class="c" style="left:0.7px;width:88.5px"></div>
<div class="c" style="left:89.2px;width:76.0px"></div>
<div class="c" style="left:165.2px;width:126.0px"></div>
<div class="c" style="left:291.2px;width:89.0px"></div>
<div class="c" style="left:380.2px;width:121.5px"></div>
<div class="c" style="left:501.7px;width:119.7px"></div>
<div class="c" style="left:621.4px;width:119.9px"></div>
<div class="c" style="left:741.3px;width:119.4px"></div>
<div class="c" style="left:860.7px;width:76.3px"></div>
<div class="c" style="left:937.0px;width:76.7px"></div>
</div>
<div class="vl" style="height:142px"></div>
<div class="hl1" style="top:21px;width:1025px"></div><div class="hl2" style="top:22px;width:1025px"></div>
<div class="abs" style="left:1025px;top:0;width:1px;height:143px;background:#fff"></div>
<div class="hs" style="top:142px;width:1048px;height:21px;border-top:1px solid #fff;"><div class="blk" style="top:0;height:19px"></div><div class="thumb" style="left:27.30000000000001px;width:88.4px;top:9px"></div></div>
</div>
</div></div>
<svg class="abs" style="left:226px;top:132px;z-index:5" width="300" height="34" viewBox="0 0 2614 296.25">
<g transform="translate(126 130) scale(.86 1) translate(-126 -130)"><g fill="none" stroke="#00008b" stroke-width="21">
<path d="M82,122 C86,84 130,68 166,92"/>
<path d="M172,148 C166,182 120,196 88,172"/>
</g>
<polygon points="142,112 190,66 192,128" fill="#00008b"/>
<polygon points="112,150 64,196 62,134" fill="#00008b"/>
</g>
<polygon points="312,92 458,92 400,152 400,200 370,200 370,152" fill="#f4f4f4" stroke="#000" stroke-width="10" stroke-linejoin="miter"/>
<polygon points="572,86 718,86 660,150 660,200 630,200 630,150" fill="#1e78e0" stroke="#000" stroke-width="9"/>
<path d="M570,66 L720,214 M720,66 L570,214" stroke="#ff0000" stroke-width="10"/>
<path d="M872,168 L828,210" stroke="#000" stroke-width="20"/>
<circle cx="917" cy="124" r="62" fill="#fff" stroke="#000" stroke-width="10"/>
<text x="880" y="158" font-family="Liberation Sans,sans-serif" font-weight="bold" font-size="105" fill="#00008b">n</text>
<text x="1097" y="120" font-family="Liberation Sans,sans-serif" font-weight="bold" font-size="80" fill="#000">A</text>
<text x="1090" y="212" font-family="Liberation Sans,sans-serif" font-weight="bold" font-size="100" fill="#000">Z</text>
<path d="M1095,128 H1165" stroke="#000" stroke-width="9"/>
<path d="M1216,58 V180" stroke="#00008b" stroke-width="10"/>
<polygon points="1188,168 1244,168 1216,216" fill="#00008b"/>
<!-- printer -->
<g transform="translate(1307,0)">
<polygon points="215,58 320,58 300,112 195,112" fill="#fff" stroke="#000" stroke-width="8"/>
<path d="M232,76 H300 M225,94 H292" stroke="#555" stroke-width="8"/>
<polygon points="170,135 200,108 335,108 335,160 300,205 170,205" fill="#008080" stroke="#000" stroke-width="8" stroke-linejoin="round"/>
<path d="M170,135 H305 L335,108 M305,135 V200" stroke="#003c3c" stroke-width="7" fill="none"/>
<path d="M175,172 H300" stroke="#003c3c" stroke-width="7"/>
<rect x="245" y="157" width="32" height="12" fill="#ffe000"/>
<!-- floppy -->
<rect x="442" y="67" width="146" height="146" fill="#808000" stroke="#000" stroke-width="8"/>
<rect x="470" y="72" width="96" height="70" fill="#f4f4f4"/>
<rect x="470" y="164" width="92" height="48" fill="#000"/>
<rect x="535" y="174" width="20" height="32" fill="#fff"/>
<rect x="570" y="76" width="10" height="10" fill="#c8c8a0"/>
<!-- eraser -->
<path d="M698,135 H745 M690,157 H750 M710,180 H762" stroke="#9a9a9a" stroke-width="8" stroke-dasharray="16 8"/>
<polygon points="755,122 800,96 866,150 822,184" fill="#38c800" stroke="#0a3a0a" stroke-width="8" stroke-linejoin="round"/>
<polygon points="770,124 800,106 850,148 822,166" fill="#a0ff20"/>
<polygon points="755,122 822,184 830,172 772,118" fill="#0a7a0a"/>
</g>
</svg>
<div id="cm">
  <div class="hl"></div>
  <div class="it" style="top:4px;font-weight:bold">Alterar</div>
  <div class="it" style="top:29px;color:#fff"><u>I</u>ncluir</div>
  <div class="it" style="top:52.5px">Excluir</div>
  <div class="it" style="top:76.5px"><u>Z</u>oom</div>
  <div class="sp" style="top:101.3px"></div>
  <div class="it" style="top:109px"><u>G</u>erar em lote</div>
  <div class="sp" style="top:133.3px"></div>
  <div class="it" style="top:141px">Ticket Store</div>
  <div class="ar" style="top:147px"></div>
  <div class="sp" style="top:165.8px"></div>
  <div class="it" style="top:173.5px">Relativo ao</div>
  <div class="ar" style="top:179.5px"></div>
  <div class="it" style="top:197px">Propriedades (CTRL+T)</div>
</div>

<div class="red" style="left:100px;top:15px;width:317.5px;height:43px"></div>
<div class="red" style="left:13.6px;top:460px;width:191px;height:70px"></div>
<div class="red" style="left:593.3px;top:459px;width:230px;height:38.6px"></div>
<div class="rt" style="top:98.6px">met<br>mme</div>
<div class="rt" style="top:160.6px">toria</div>

</body></html>
